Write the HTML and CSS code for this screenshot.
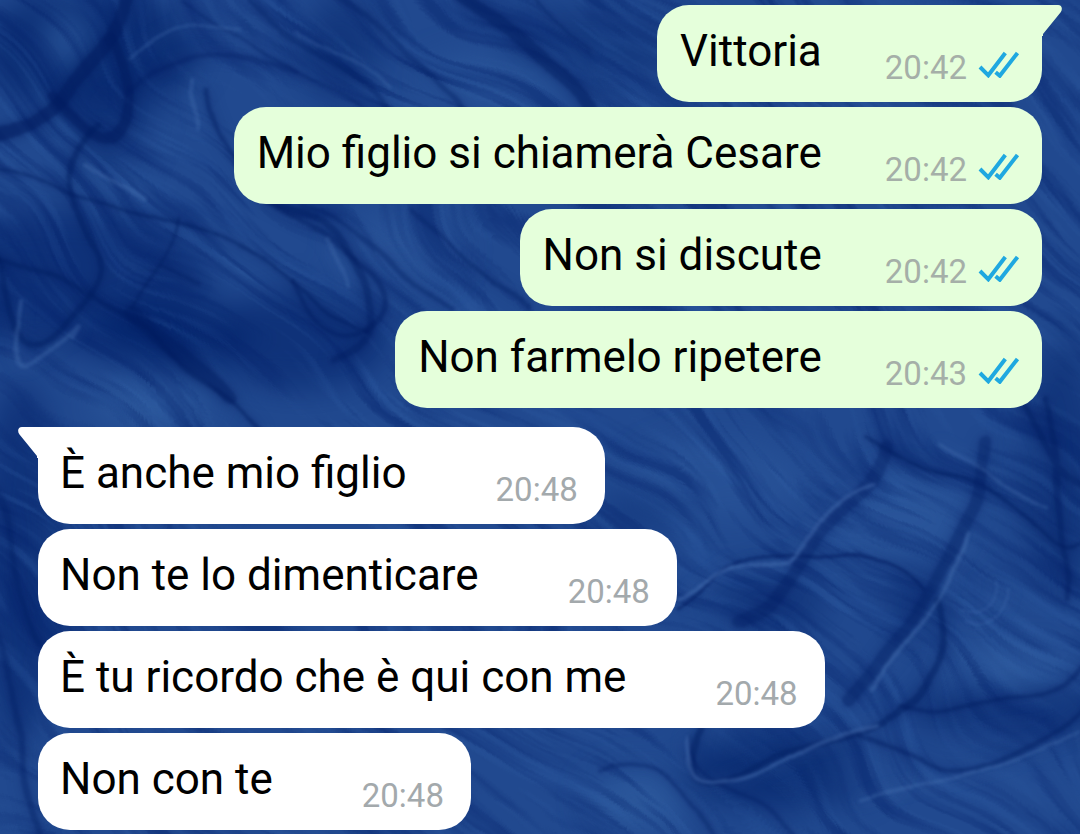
FILE: index.html
```
<!DOCTYPE html>
<html lang="it">
<head>
  <meta charset="UTF-8" />
  <meta name="viewport" content="width=device-width, initial-scale=1.0"/>
  <title>Chat</title>
  <link rel="stylesheet" href="styles.css">
</head>
<body>

  <!-- marbled blue wallpaper -->
  <svg class="wallpaper" viewBox="0 0 1080 834" preserveAspectRatio="xMidYMid slice" color-interpolation-filters="sRGB" aria-hidden="true">
    <defs>
      <filter id="soft" x="-20%" y="-20%" width="140%" height="140%"><feGaussianBlur stdDeviation="16"/></filter>
      <filter id="ink" x="-5%" y="-5%" width="110%" height="110%">
        <feTurbulence type="fractalNoise" baseFrequency="0.012" numOctaves="2" seed="4" result="n"/>
        <feDisplacementMap in="SourceGraphic" in2="n" scale="16" xChannelSelector="R" yChannelSelector="G" result="d"/>
        <feGaussianBlur in="d" stdDeviation="1.6" result="line"/>
        <feGaussianBlur in="d" stdDeviation="7" result="halo"/>
        <feMerge><feMergeNode in="halo"/><feMergeNode in="line"/></feMerge>
      </filter>
      <filter id="marble" x="0" y="0" width="100%" height="100%">
        <feTurbulence type="fractalNoise" baseFrequency="0.005 0.05" numOctaves="4" seed="9"/>
        <feColorMatrix values="0 0 0 0 0.02  0 0 0 0 0.14  0 0 0 0 0.43  3.4 0 0 0 -1.5" result="s"/>
        <feTurbulence type="fractalNoise" baseFrequency="0.004" numOctaves="2" seed="21" result="w"/>
        <feDisplacementMap in="s" in2="w" scale="180" xChannelSelector="R" yChannelSelector="G"/>
      </filter>
      <filter id="shine" x="0" y="0" width="100%" height="100%">
        <feTurbulence type="fractalNoise" baseFrequency="0.006 0.06" numOctaves="3" seed="31"/>
        <feColorMatrix values="0 0 0 0 0.22  0 0 0 0 0.42  0 0 0 0 0.7  3.4 0 0 0 -1.8" result="s"/>
        <feTurbulence type="fractalNoise" baseFrequency="0.004" numOctaves="2" seed="21" result="w"/>
        <feDisplacementMap in="s" in2="w" scale="180" xChannelSelector="R" yChannelSelector="G"/>
      </filter>
    </defs>
    <rect width="1080" height="834" fill="#21498f"/>
    <g filter="url(#soft)">
      <g fill="#03236a">
        <ellipse cx="90" cy="50" rx="110" ry="60" opacity=".7"/>
        <ellipse cx="110" cy="120" rx="40" ry="50" opacity=".5"/>
        <ellipse cx="60" cy="280" rx="150" ry="70" opacity=".6"/>
        <ellipse cx="170" cy="335" rx="80" ry="34" opacity=".8"/>
        <ellipse cx="300" cy="340" rx="90" ry="50" opacity=".6"/>
        <ellipse cx="340" cy="50" rx="40" ry="50" opacity=".5"/>
        <ellipse cx="590" cy="50" rx="90" ry="40" opacity=".4"/>
        <ellipse cx="20" cy="560" rx="40" ry="180" opacity=".6"/>
        <ellipse cx="650" cy="510" rx="50" ry="20" opacity=".4"/>
        <ellipse cx="770" cy="600" rx="60" ry="28" opacity=".5"/>
        <ellipse cx="915" cy="605" rx="26" ry="40" opacity=".5"/>
        <ellipse cx="780" cy="770" rx="100" ry="38" opacity=".7"/>
        <ellipse cx="1010" cy="710" rx="110" ry="26" opacity=".5"/>
        <ellipse cx="1060" cy="470" rx="40" ry="130" opacity=".5"/>
      </g>
      <g fill="#2f5ca0">
        <ellipse cx="66" cy="40" rx="22" ry="28" opacity=".8"/>
        <ellipse cx="500" cy="80" rx="80" ry="26" opacity=".6"/>
        <ellipse cx="400" cy="250" rx="60" ry="34" opacity=".5"/>
        <ellipse cx="150" cy="405" rx="60" ry="20" opacity=".7"/>
        <ellipse cx="900" cy="520" rx="70" ry="40" opacity=".6"/>
        <ellipse cx="720" cy="480" rx="90" ry="40" opacity=".4"/>
        <ellipse cx="1010" cy="670" rx="60" ry="22" opacity=".8"/>
        <ellipse cx="640" cy="800" rx="50" ry="30" opacity=".7"/>
        <ellipse cx="860" cy="770" rx="30" ry="16" opacity=".5"/>
      </g>
    </g>
    <g class="streaks">
      <rect x="-500" y="-500" width="2100" height="1900" filter="url(#marble)"/>
      <rect x="-500" y="-500" width="2100" height="1900" filter="url(#shine)" opacity=".5"/>
    </g>
    <g class="veins" filter="url(#ink)">
      <g stroke="#011c60">
        <path stroke-width="14" opacity=".5" d="M130 -10C120 40 90 60 62 96S20 130-10 134"/>
        <path stroke-width="10" opacity=".5" d="M108 40C130 70 140 110 118 132S70 110 50 96"/>
        <path stroke-width="6" opacity=".45" d="M100 125C60 160 60 200 90 240S90 300 70 320S30 370 14 330S6 260-10 250"/>
        <path stroke-width="4" opacity=".45" d="M-10 165C80 210 160 200 240 245S300 310 370 330"/>
        <path stroke-width="5" opacity=".45" d="M-10 255C50 280 110 290 160 340S220 390 260 430"/>
        <path stroke-width="14" opacity=".4" d="M130 310C160 350 200 350 230 400"/>
        <path stroke-width="5" opacity=".4" d="M205 90C210 150 260 200 330 240S400 300 372 325S310 330 292 280"/>
        <path stroke-width="7" opacity=".4" d="M270 200C330 220 370 260 374 300S360 350 330 360"/>
        <path stroke-width="3" opacity=".45" d="M180 215C180 250 150 270 130 305M160 265L200 288"/>
        <path stroke-width="14" opacity=".4" d="M455 -10C500 30 560 60 590 110"/>
        <path stroke-width="6" opacity=".35" d="M330 -10C380 30 420 60 465 110M250 0C300 50 350 60 385 110"/>
        <path stroke-width="3" opacity=".35" d="M180 0C230 40 300 60 360 110M530 -10C550 20 570 30 590 50"/>
        <path stroke-width="5" opacity=".3" d="M130 90C170 60 220 40 300 70"/>
        <path stroke-width="5" opacity=".35" d="M410 210C450 240 480 280 530 310M300 205C370 230 400 270 450 310"/>
        <path stroke-width="3" opacity=".6" d="M680 610C720 570 750 548 800 552S890 550 925 590"/>
        <path stroke-width="14" opacity=".3" d="M885 445C870 500 830 510 800 560S770 600 740 620"/>
        <path stroke-width="4" opacity=".45" d="M865 435C930 480 980 470 1030 520S1070 540 1090 546"/>
        <path stroke-width="12" opacity=".32" d="M985 440C980 520 950 560 920 610S880 650 850 700"/>
        <path stroke-width="7" opacity=".45" d="M940 600C960 650 930 680 900 710S800 740 740 775S690 750 704 730"/>
        <path stroke-width="6" opacity=".4" d="M1045 400C1060 450 1060 500 1068 600M1020 400C1050 460 1070 480 1090 490"/>
        <path stroke-width="5" opacity=".4" d="M860 735C930 750 930 790 1000 760S1070 720 1090 700M1090 660C1040 710 960 710 900 705"/>
        <path stroke-width="4" opacity=".35" d="M690 740C690 800 760 790 800 840M600 770C650 740 680 790 720 840"/>
        <path stroke-width="6" opacity=".35" d="M-10 480C20 520 10 600 40 640M-10 620C20 680 10 740 40 834"/>
      </g>
      <g stroke="#4f7abb">
        <path stroke-width="4" opacity=".3" d="M85 165C110 180 130 180 145 195M70 340C90 310 80 330 40 360S16 340 20 300"/>
        <path stroke-width="4" opacity=".25" d="M190 80C186 100 200 110 198 130M325 240C340 260 350 270 352 285"/>
        <path stroke-width="4" opacity=".4" d="M680 600C730 560 760 565 790 558C820 530 830 500 870 485"/>
        <path stroke-width="4" opacity=".35" d="M970 535C960 570 940 610 910 640S880 670 870 690"/>
        <path stroke-width="4" opacity=".4" d="M880 724C820 735 780 770 740 780S690 790 688 740"/>
        <path stroke-width="2" opacity=".25" d="M970 620C990 630 1010 610 1008 590M965 610C990 615 1000 600 996 580"/>
        <path stroke-width="3" opacity=".3" d="M860 800C920 780 960 790 1080 730M940 440C970 460 1000 490 1050 505"/>
        <path stroke-width="3" opacity=".25" d="M130 60C170 20 200 20 240 30M300 30C340 60 360 60 390 90"/>
      </g>
    </g>
  </svg>

  <!-- read receipt, shared by all the sent messages -->
  <svg class="defs" aria-hidden="true">
    <symbol id="read" viewBox="0 0 42 28">
      <path d="M2 17L10.3 25.3L27.3 3M17.6 22.3L21.8 25.8L39.5 3"/>
    </symbol>
  </svg>

  <main class="chat">
    <section class="group sent">
      <div class="bubble first">
        <svg class="tail" viewBox="0 0 20 31" aria-hidden="true"><path d="M0 0H16C20 0 21 4 18.500 7.500L1 29V31H0Z"/></svg>
        <p>Vittoria</p>
        <div class="meta"><time>20:42</time><svg class="ticks" role="img" aria-label="Letto"><use href="#read"/></svg></div>
      </div>
      <div class="bubble">
        <p>Mio figlio si chiamerà Cesare</p>
        <div class="meta"><time>20:42</time><svg class="ticks" role="img" aria-label="Letto"><use href="#read"/></svg></div>
      </div>
      <div class="bubble">
        <p>Non si discute</p>
        <div class="meta"><time>20:42</time><svg class="ticks" role="img" aria-label="Letto"><use href="#read"/></svg></div>
      </div>
      <div class="bubble">
        <p>Non farmelo ripetere</p>
        <div class="meta"><time>20:43</time><svg class="ticks" role="img" aria-label="Letto"><use href="#read"/></svg></div>
      </div>
    </section>

    <section class="group received">
      <div class="bubble first">
        <svg class="tail" viewBox="0 0 20 31" aria-hidden="true"><path d="M20 0H4C0 0-1 4 1.500 7.500L19 29V31H20Z"/></svg>
        <p>È anche mio figlio</p>
        <div class="meta"><time>20:48</time></div>
      </div>
      <div class="bubble">
        <p>Non te lo dimenticare</p>
        <div class="meta"><time>20:48</time></div>
      </div>
      <div class="bubble">
        <p>È tu ricordo che è qui con me</p>
        <div class="meta"><time>20:48</time></div>
      </div>
      <div class="bubble">
        <p>Non con te</p>
        <div class="meta"><time>20:48</time></div>
      </div>
    </section>
  </main>

</body>
</html>
```
FILE: styles.css
```
* {
  box-sizing: border-box;
}
body {
  margin: 0;
  background: #21498f;
  font-family: Roboto, sans-serif;
  color: #000;
}
.wallpaper {
  position: fixed;
  inset: 0;
  width: 100%;
  height: 100%;
  z-index: -1;
}
.streaks {
  transform: rotate(38deg);
  transform-origin: 540px 417px;
  opacity: 0.5;
}
.veins {
  fill: none;
  stroke-linecap: round;
}
.defs {
  position: absolute;
  width: 0;
  height: 0;
}
.chat {
  display: flex;
  flex-direction: column;
  gap: 19px;
  padding: 5px 38px 4px;
}
.group {
  display: flex;
  flex-direction: column;
  gap: 5px;
}
.sent {
  align-items: flex-end;
}
.received {
  align-items: flex-start;
}
.bubble {
  position: relative;
  display: flex;
  padding: 20px 22px 14px;
  border-radius: 32px;
}
.sent .bubble {
  gap: 63px;
  padding-left: 23px;
  background: #e5ffdb;
}
.received .bubble {
  gap: 89px;
  padding-right: 27px;
  background: #fff;
}
.sent .first {
  border-top-right-radius: 0;
}
.received .first {
  border-top-left-radius: 0;
}
.tail {
  position: absolute;
  top: 0;
  width: 20px;
  height: 31px;
}
.sent .tail {
  left: 100%;
  fill: #e5ffdb;
}
.received .tail {
  right: 100%;
  fill: #fff;
}
p {
  margin: 0;
  padding-bottom: 11px;
  font-size: 44px;
  line-height: 52px;
}
.meta {
  display: flex;
  align-items: flex-end;
  gap: 11px;
  font-size: 33px;
  line-height: 40px;
  color: #a3a9ac;
}
.sent .meta {
  color: #a5afa8;
}
.ticks {
  width: 42px;
  height: 28px;
  margin-bottom: 10px;
  fill: none;
  stroke: #1fa8e0;
  stroke-width: 4;
}
@media (max-width: 900px) {
  .chat {
    padding: 5px 22px 4px;
  }
  .sent .bubble, .received .bubble {
    gap: 20px;
  }
  p {
    font-size: 28px;
    line-height: 36px;
  }
  .meta {
    font-size: 20px;
    line-height: 24px;
  }
}
```
